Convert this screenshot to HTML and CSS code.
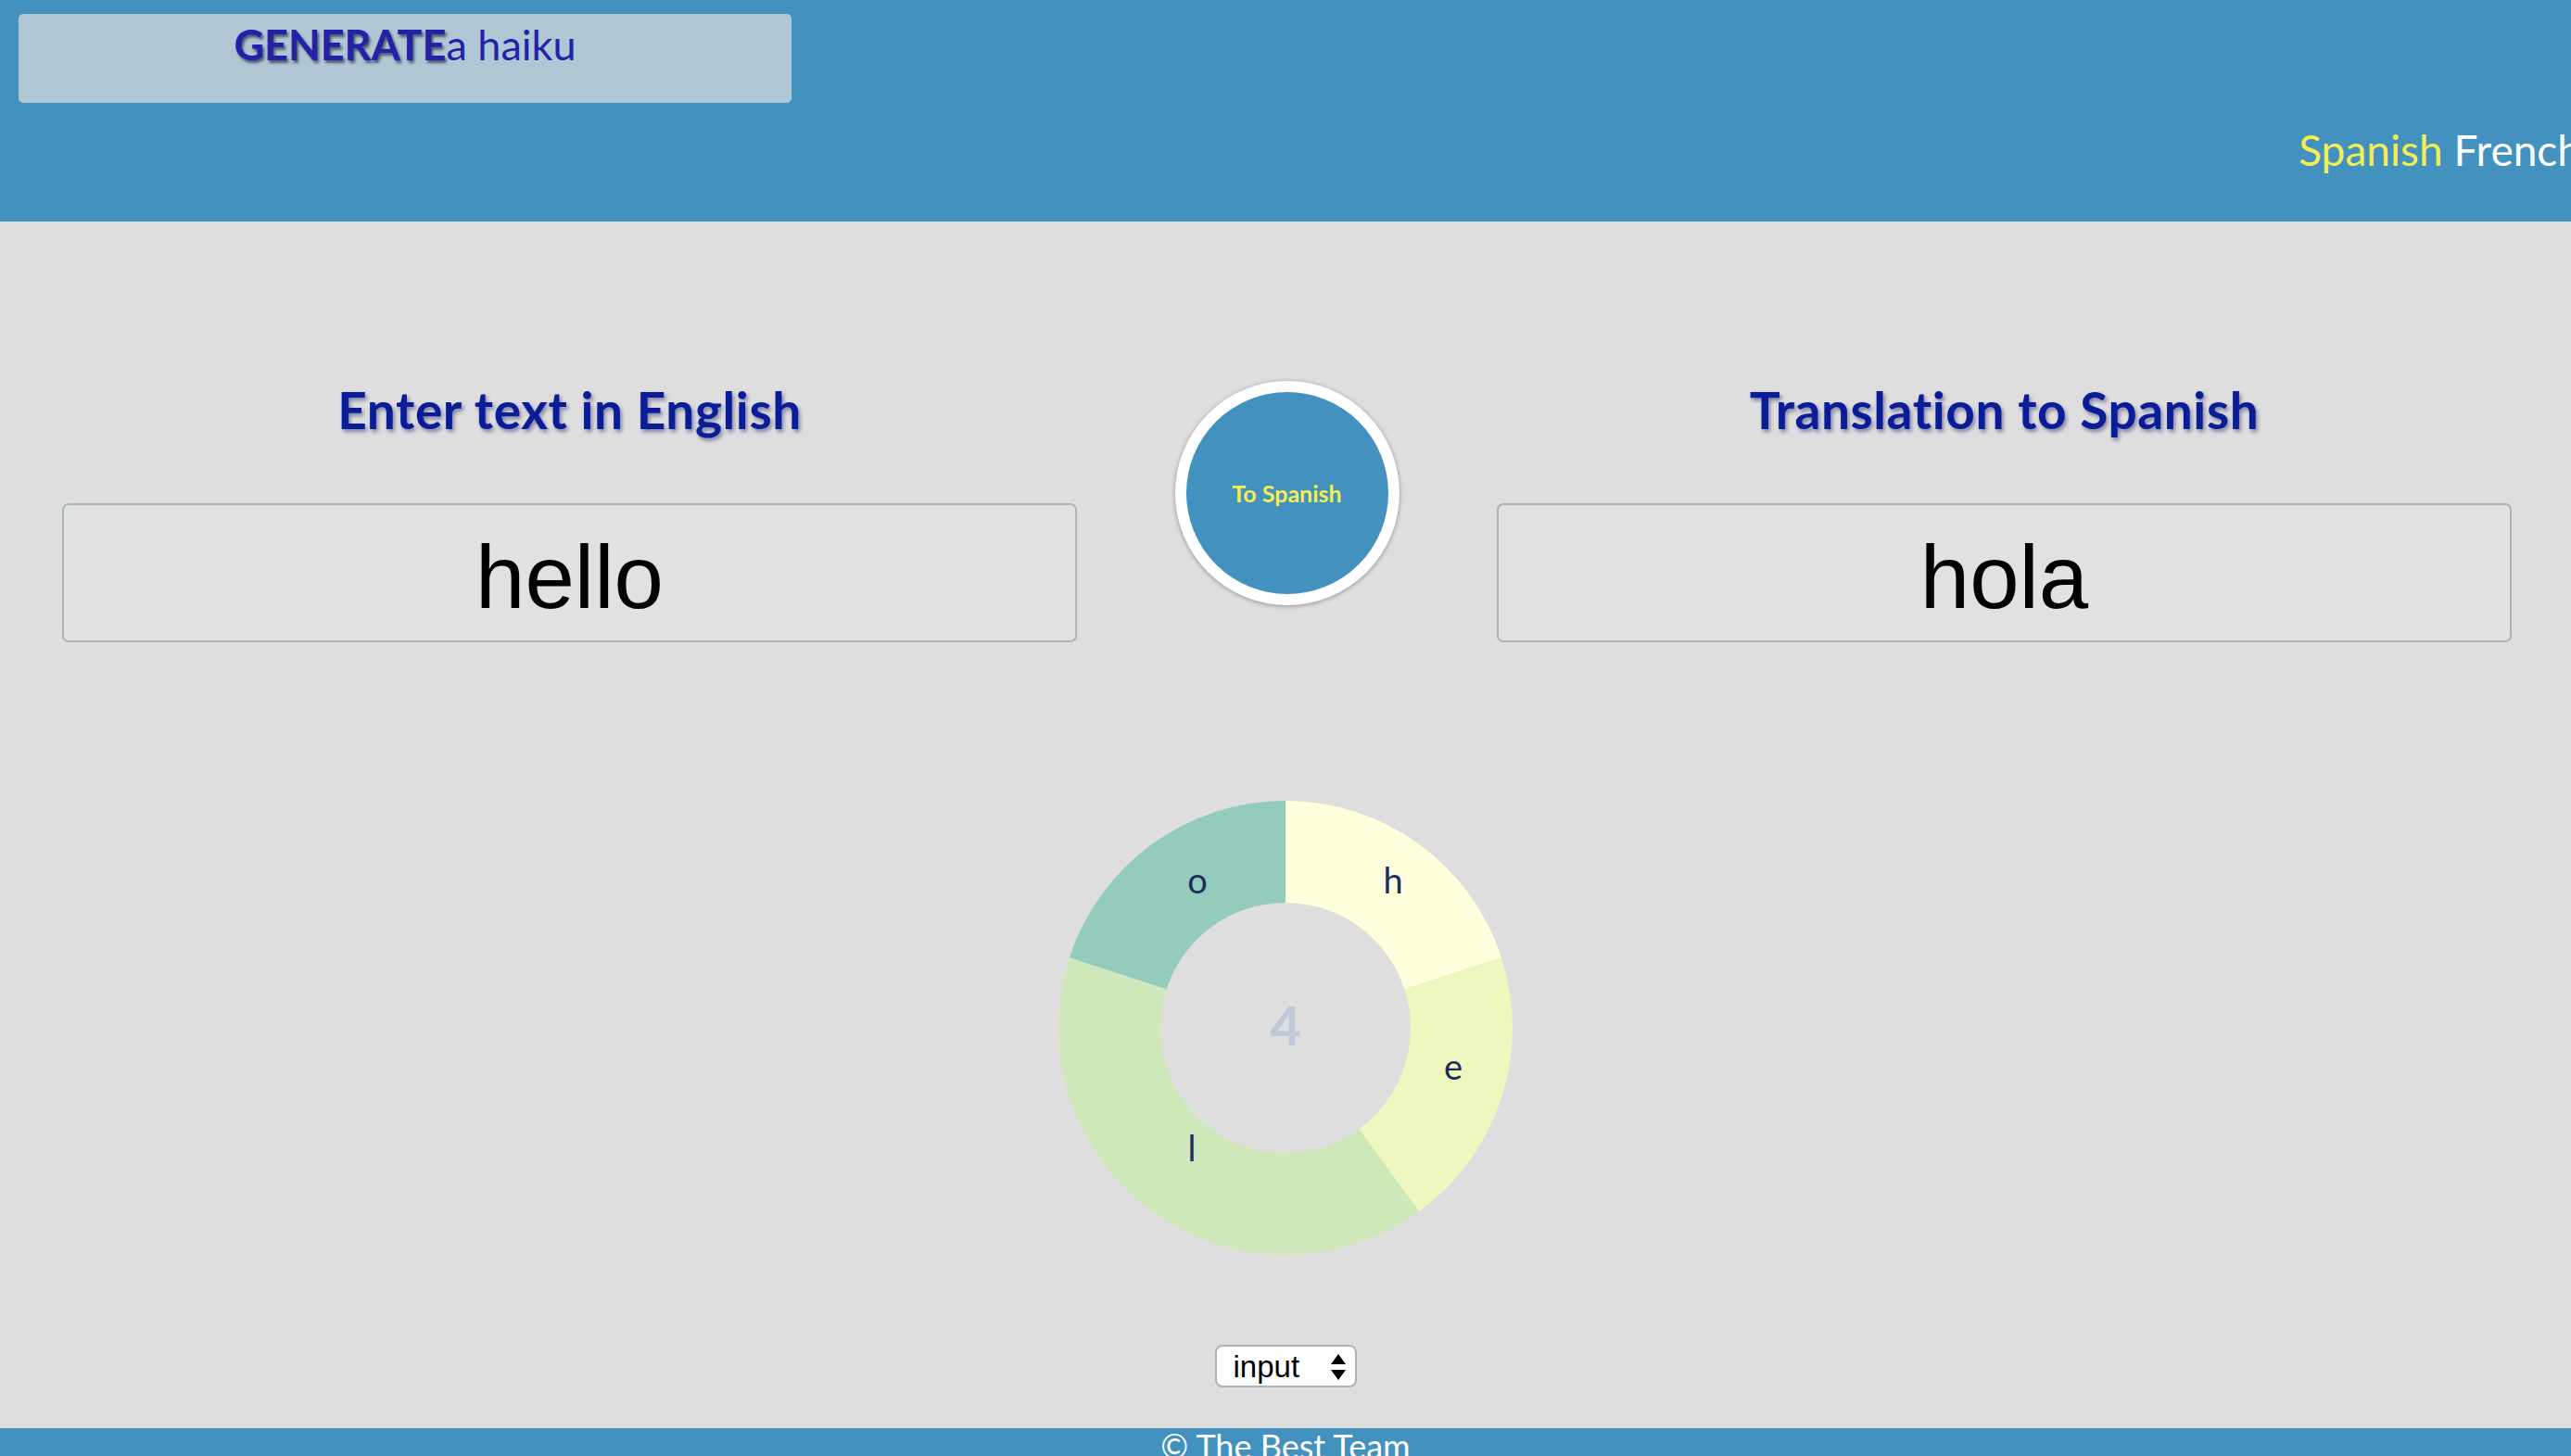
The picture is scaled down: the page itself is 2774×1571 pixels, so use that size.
FILE: index.html
```html
<!DOCTYPE html>
<html lang="en">
<head>
<meta charset="utf-8">
<title>Translator</title>
<link rel="stylesheet" href="styles.css">
</head>
<body>
<header class="topbar">
  <div class="gen-row">
    <button class="gen-btn"><span class="gen-strong">GENERATE</span><span class="gen-rest">a haiku</span></button>
  </div>
  <nav class="lang-nav">
    <span class="lang lang-active">Spanish</span> <span class="lang">French</span>
  </nav>
</header>

<main class="main">
  <section class="translate-grid">
    <div class="col">
      <h2 class="col-title">Enter text in English</h2>
      <div class="text-box"><span class="text-val">hello</span></div>
    </div>
    <div class="mid">
      <button class="go-btn"><span class="go-inner">To Spanish</span></button>
    </div>
    <div class="col">
      <h2 class="col-title">Translation to Spanish</h2>
      <div class="text-box"><span class="text-val">hola</span></div>
    </div>
  </section>

  <section class="chart-wrap">
    <svg class="donut" width="500" height="500" viewBox="0 0 500 500">
      <path fill="#FFFFDD" d="M250,5 A245,245 0 0 1 483.01,174.29 L378.39,208.28 A135,135 0 0 0 250,115 Z"/>
      <path fill="#EEF7BE" d="M483.01,174.29 A245,245 0 0 1 394.01,448.21 L329.35,359.22 A135,135 0 0 0 378.39,208.28 Z"/>
      <path fill="#CFE8BA" d="M394.01,448.21 A245,245 0 0 1 16.99,174.29 L121.61,208.28 A135,135 0 0 0 329.35,359.22 Z"/>
      <path fill="#93CCBD" d="M16.99,174.29 A245,245 0 0 1 250,5 L250,115 A135,135 0 0 0 121.61,208.28 Z"/>
      <text class="slice-label" x="366" y="105">h</text>
      <text class="slice-label" x="431" y="306">e</text>
      <text class="slice-label" x="149" y="394">l</text>
      <text class="slice-label" x="155" y="105">o</text>
      <text class="center-count" x="250" y="269">4</text>
    </svg>
  </section>

  <div class="select-row">
    <label class="select-wrap">
      <select class="src-select">
        <option>input</option>
        <option>output</option>
      </select>
      <svg class="select-arrows" width="16" height="28" viewBox="0 0 16 28">
        <polygon points="8,0 16,11 0,11" fill="#000"/>
        <polygon points="0,17 16,17 8,28" fill="#000"/>
      </svg>
    </label>
  </div>
</main>

<footer class="footer">© The Best Team</footer>
</body>
</html>
```

FILE: styles.css
```css
html, body {
  margin: 0;
  padding: 0;
}

body {
  width: 2774px;
  height: 1571px;
  overflow: hidden;
  background: #DFDEDF;
  font-family: Lato, "Open Sans", sans-serif;
}

.topbar {
  box-sizing: border-box;
  height: 239px;
  background: #4391BE;
  padding: 15px 0 0 20px;
}

.gen-row {
  display: flex;
}

.gen-btn {
  box-sizing: border-box;
  width: 834px;
  height: 96px;
  padding: 6px 0 0;
  border: none;
  border-radius: 5px;
  background: #AFC7D5;
  color: #2222A8;
  font-family: Lato, "Open Sans", sans-serif;
  font-size: 45px;
  line-height: 1.2;
  display: flex;
  align-items: flex-start;
  justify-content: center;
}

.gen-strong {
  font-weight: 700;
  text-shadow: 2px 3px 3px rgba(0, 0, 30, 0.55);
}

.gen-rest {
  font-weight: 400;
}

.lang-nav {
  display: flex;
  justify-content: flex-end;
  gap: 12px;
  margin-top: 25px;
  margin-right: -11px;
  white-space: nowrap;
  font-size: 46px;
  line-height: 1.15;
}

.lang {
  color: #FFFFFF;
}

.lang-active {
  color: #F5EE52;
}

.main {
  box-sizing: border-box;
  height: 1302px;
  padding-top: 170px;
}

.translate-grid {
  display: grid;
  grid-template-columns: 1095px 1fr 1095px;
  padding: 0 64px 0 67px;
}

.col {
  display: flex;
  flex-direction: column;
  align-items: stretch;
}

.col-title {
  margin: 0 0 68px;
  font-size: 55px;
  line-height: 1.2;
  letter-spacing: 0.6px;
  font-weight: 700;
  color: #0B1C98;
  text-align: center;
  text-shadow: 2px 3px 4px rgba(10, 20, 90, 0.45);
}

.text-box {
  box-sizing: border-box;
  height: 150px;
  border: 2px solid #A9B6B6;
  border-radius: 7px;
  background: #E1E1E3;
  display: flex;
  align-items: center;
  justify-content: center;
  padding-top: 10px;
}

.text-val {
  font-family: "Liberation Sans", Arial, sans-serif;
  font-size: 96px;
  line-height: 1;
  color: #000;
}

.mid {
  display: flex;
  justify-content: center;
  align-items: flex-start;
  padding-top: 2px;
}

.go-btn {
  box-sizing: border-box;
  width: 242px;
  height: 242px;
  border-radius: 50%;
  border: 12px solid #FFFFFF;
  background: #4391BE;
  box-shadow: 0 1px 5px rgba(0, 0, 0, 0.35);
  padding: 0;
  display: flex;
  align-items: center;
  justify-content: center;
}

.go-inner {
  font-family: Lato, "Open Sans", sans-serif;
  font-size: 25px;
  font-weight: 700;
  color: #F5EE52;
}

.chart-wrap {
  display: flex;
  justify-content: center;
  margin-top: 166px;
}

.donut {
  display: block;
}

.slice-label {
  font-family: Lato, "Open Sans", sans-serif;
  font-size: 38px;
  fill: #1F2D5C;
  text-anchor: middle;
}

.center-count {
  font-family: Lato, "Open Sans", sans-serif;
  font-size: 58px;
  font-weight: 700;
  fill: #BFCAD8;
  text-anchor: middle;
}

.select-row {
  display: flex;
  justify-content: center;
  margin-top: 92px;
}

.select-wrap {
  position: relative;
  display: inline-block;
}

.src-select {
  appearance: none;
  -webkit-appearance: none;
  box-sizing: border-box;
  width: 153px;
  height: 46px;
  border: 2px solid #A9B5B5;
  border-radius: 8px;
  background: #FFFFFF;
  padding: 0 0 0 18px;
  font-family: "Liberation Sans", Arial, sans-serif;
  font-size: 33px;
  color: #000;
  display: block;
}

.select-arrows {
  position: absolute;
  right: 12px;
  top: 10px;
  pointer-events: none;
}

.footer {
  box-sizing: border-box;
  height: 30px;
  background: #4391BE;
  color: #FFFFFF;
  text-align: center;
  font-size: 36px;
  line-height: 1.1;
  overflow: visible;
  white-space: nowrap;
}
```
